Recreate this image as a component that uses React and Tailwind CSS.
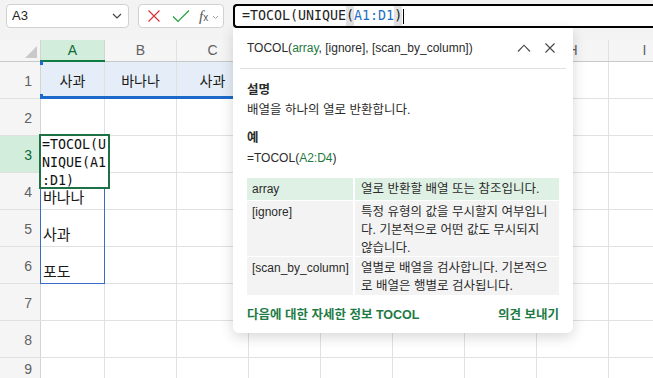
import React from "react";

const colW = [64, 72, 72, 72, 72, 72, 72, 72, 72];
const letters = ["A", "B", "C", "", "", "", "", "H", "I"];
const rowH = [37, 37, 37, 37, 37, 37, 37, 37, 22];

const sans = "font-['Segoe_UI','Liberation_Sans','Noto_Sans_CJK_KR',sans-serif]";
const mono = "font-['DejaVu_Sans_Mono','Liberation_Mono',monospace]";

function Cell({ w, r, c, children }) {
  const fill = r === 0 && c < 4 ? "bg-[#e5eef8]" : "bg-white";
  return (
    <div
      className={`shrink-0 border-r border-[#e1e1e1] h-full ${fill} relative`}
      style={{ width: w }}
    >
      {children}
    </div>
  );
}

export default function App() {
  const data = {
    "0-0": "사과",
    "0-1": "바나나",
    "0-2": "사과",
    "3-0": "바나나",
    "4-0": "사과",
    "5-0": "포도",
  };
  return (
    <div className={`relative w-[653px] h-[378px] overflow-hidden bg-white ${sans}`}>
      {/* Toolbar */}
      <div className="h-[40px] bg-[#f3f3f3] flex items-start pt-[4px] pl-[6px]">
        <div className="w-[123px] h-[24px] bg-white border border-[#d1d1d1] rounded-[4px] flex items-center justify-between pl-[5px] pr-[4px]">
          <span className="text-[13px] text-[#242424]">A3</span>
          <svg width="10" height="6" viewBox="0 0 10 6" className="mr-[2px]">
            <path d="M1 1 L5 5 L9 1" fill="none" stroke="#444" strokeWidth="1.2" />
          </svg>
        </div>
        <div className="ml-[9px] w-[86px] h-[24px] bg-white border border-[#d1d1d1] rounded-[4px] flex items-center pl-[8px]">
          <svg width="14" height="14" viewBox="0 0 14 14">
            <path d="M1.5 1.5 L12.5 12.5 M12.5 1.5 L1.5 12.5" stroke="#e0313a" strokeWidth="1.2" fill="none" />
          </svg>
          <svg width="18" height="14" viewBox="0 0 18 14" className="ml-[11px]">
            <path d="M1 7.5 L6 12.5 L17 1.5" stroke="#22a03c" strokeWidth="1.2" fill="none" />
          </svg>
          <span className="ml-[9px] text-[15px] leading-none text-[#555] font-['Liberation_Serif',serif] italic">
            f<span className="text-[10px] not-italic font-['Liberation_Sans',sans-serif]">x</span>
          </span>
          <svg width="7" height="5" viewBox="0 0 7 5" className="ml-[4px] mt-[2px]">
            <path d="M1 1 L3.5 3.5 L6 1" fill="none" stroke="#aaa" strokeWidth="1" />
          </svg>
        </div>
        <div className={`ml-[9px] flex-1 h-[24px] bg-white border-2 border-r-0 border-black rounded-l-[4px] flex items-center pl-[7px] text-[13.3px] text-[#222] ${mono}`}>
          <span>=TOCOL(UNIQUE</span>
          <span className="bg-[#e3e3e3]">(</span>
          <span className="text-[#1f6fc5]">A1:D1</span>
          <span className="bg-[#e3e3e3]">)</span>
          <span className="w-px h-[15px] bg-black ml-[1px]" />
        </div>
      </div>

      {/* Column header */}
      <div className="flex h-[22px] bg-[#f5f5f5] border-b border-[#c8c8c8]">
        <div className="w-[41px] shrink-0 border-r border-[#d4d4d4] relative">
          <svg width="12" height="12" viewBox="0 0 12 12" className="absolute right-[3px] bottom-[3px]">
            <path d="M12 0 L12 12 L0 12 Z" fill="#c9c9c9" />
          </svg>
        </div>
        {colW.map((w, i) => (
          <div
            key={i}
            className={`shrink-0 flex items-center justify-center text-[14px] border-r ${
              i === 0 ? "bg-[#d3eddd] text-[#0e6b35] border-[#d4d4d4]" : "text-[#616161] border-[#e1e1e1]"
            }`}
            style={{ width: w }}
          >
            {letters[i]}
          </div>
        ))}
      </div>

      {/* Rows */}
      {rowH.map((h, r) => (
        <div key={r} className="flex border-b border-[#e1e1e1]" style={{ height: h }}>
          <div
            className={`w-[41px] shrink-0 border-r border-[#d4d4d4] flex items-center justify-end pr-[8px] pt-[2px] text-[14px] ${
              r === 2 ? "bg-[#d3eddd] text-[#0e6b35]" : "bg-[#f5f5f5] text-[#616161]"
            }`}
          >
            {r + 1}
          </div>
          {colW.map((w, c) => {
            const t = data[`${r}-${c}`];
            return (
              <Cell key={c} w={w} r={r} c={c}>
                {t && r === 0 && (
                  <div className="absolute inset-0 flex items-center justify-center text-[14px] text-[#1a1a1a] font-['Noto_Sans_CJK_KR',sans-serif]">
                    {t}
                  </div>
                )}
                {t && r > 0 && (
                  <div className="absolute left-[2px] bottom-[1px] text-[15px] leading-[22px] text-[#1a1a1a] font-['Noto_Sans_CJK_KR',sans-serif]">
                    {t}
                  </div>
                )}
              </Cell>
            );
          })}
        </div>
      ))}

      {/* Column A header selection line */}
      <div className="absolute left-[40px] top-[60px] w-[65px] h-[2px] bg-[#107c41]" />

      {/* Range A1:D1 highlight border */}
      <div className="absolute left-[40px] top-[96px] w-[281px] h-[3px] bg-[#1b6ac9]" />
      <div className="absolute left-[40px] top-[61px] w-[3px] h-[4px] bg-[#1b6ac9]" />
      <div className="absolute left-[40px] top-[94px] w-[3px] h-[4px] bg-[#1b6ac9]" />

      {/* Spill range border */}
      <div className="absolute left-[40px] top-[134px] w-[65px] h-[150px] border border-[#3a6cc4]" />

      {/* Active cell editor */}
      <div className={`absolute left-[39px] top-[134px] w-[71px] h-[55px] bg-white border-2 border-[#1e7145] pl-[1px] text-[13.3px] leading-[18px] text-[#111] ${mono}`}>
        <div>=TOCOL(U</div>
        <div>NIQUE(A1</div>
        <div>:D1)</div>
      </div>

      {/* Function tooltip popup */}
      <div className="absolute left-[233px] top-[28px] w-[340px] h-[305px] bg-white rounded-b-[6px] shadow-[0_4px_14px_rgba(0,0,0,0.16)] text-[#2b2b2b]">
        <div className="h-[40px] flex items-center justify-between pl-[14px] pr-[18px]">
          <div className="text-[12px]">
            TOCOL(<span className="text-[#1e7b3f]">array</span>, [ignore], [scan_by_column])
          </div>
          <div className="flex items-center gap-[14px]">
            <svg width="14" height="8" viewBox="0 0 14 8">
              <path d="M1 7.5 L7 1.2 L13 7.5" fill="none" stroke="#444" strokeWidth="1.1" />
            </svg>
            <svg width="10" height="10" viewBox="0 0 10 10">
              <path d="M0.5 0.5 L9.5 9.5 M9.5 0.5 L0.5 9.5" fill="none" stroke="#444" strokeWidth="1.1" />
            </svg>
          </div>
        </div>
        <div className="h-px bg-[#e1e1e1] mx-[7px]" />
        <div className="px-[14px] text-[12.5px] leading-[20px]">
          <div className="mt-[11px] font-bold">설명</div>
          <div>배열을 하나의 열로 반환합니다.</div>
          <div className="mt-[8px] font-bold">예</div>
          <div className="text-[12px]">
            =TOCOL(<span className="text-[#1e7b3f]">A2:D4</span>)
          </div>
          <div className="mt-[10px] grid grid-cols-[106px_1fr] gap-x-[2px] gap-y-[1px] text-[12px] leading-[18px]">
            <div className="bg-[#dff1e5] h-[22px] flex items-center pl-[5px]">array</div>
            <div className="bg-[#dff1e5] h-[22px] flex items-center pl-[6px] whitespace-nowrap text-[12.5px]">열로 반환할 배열 또는 참조입니다.</div>
            <div className="bg-[#f3f3f3] h-[55px] pt-[2px] pl-[5px]">[ignore]</div>
            <div className="bg-[#f3f3f3] h-[55px] pt-[2px] pl-[6px] whitespace-nowrap text-[12.5px]">
              특정 유형의 값을 무시할지 여부입니<br />다. 기본적으로 어떤 값도 무시되지<br />않습니다.
            </div>
            <div className="bg-[#f3f3f3] h-[38px] pt-[2px] pl-[5px]">[scan_by_column]</div>
            <div className="bg-[#f3f3f3] h-[38px] pt-[2px] pl-[6px] whitespace-nowrap text-[12.5px]">
              열별로 배열을 검사합니다. 기본적으<br />로 배열은 행별로 검사됩니다.
            </div>
          </div>
          <div className="mt-[10px] flex justify-between font-bold text-[#1e7b45] text-[12.5px]">
            <span>다음에 대한 자세한 정보 TOCOL</span>
            <span>의견 보내기</span>
          </div>
        </div>
      </div>
    </div>
  );
}
